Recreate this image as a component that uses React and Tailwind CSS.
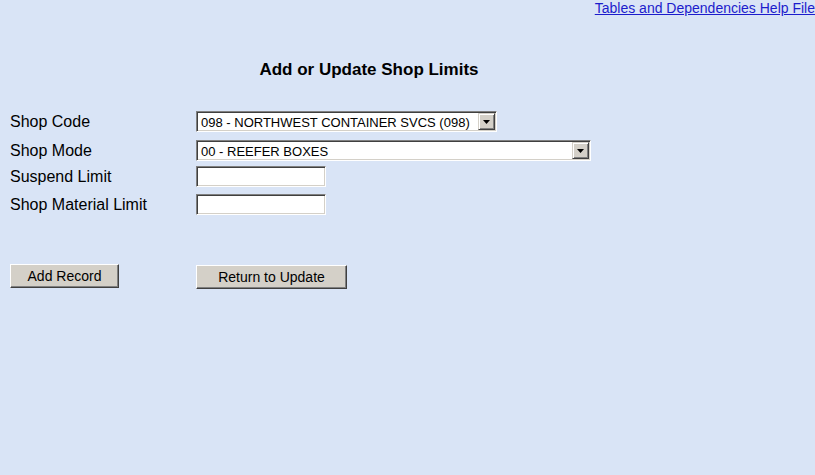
export default function App() {
  return (
    <div className="min-h-[475px] w-[815px] bg-[#d9e4f6] font-['Liberation_Sans',Arial,sans-serif] text-black">
      <div className="text-right text-[14px] leading-[16px]">
        <a href="#" className="text-[#1c1ccc] underline">Tables and Dependencies Help File</a>
      </div>

      <h1 className="mt-[44px] w-[738px] text-center text-[17px] font-bold leading-[19px]">Add or Update Shop Limits</h1>

      <div className="mt-[32px] pl-[10px]">
        <FormRow label="Shop Code" height="h-[29px]">
          <Select width="w-[301px]" value="098 - NORTHWEST CONTAINER SVCS (098)" />
        </FormRow>
        <FormRow label="Shop Mode" height="h-[26px]">
          <Select width="w-[395px]" value="00 - REEFER BOXES" />
        </FormRow>
        <FormRow label="Suspend Limit" height="h-[28px]">
          <TextBox />
        </FormRow>
        <FormRow label="Shop Material Limit" height="h-[21px]">
          <TextBox />
        </FormRow>
      </div>

      <div className="mt-[49px] flex items-start pl-[10px]">
        <div className="w-[186px]">
          <Button width="w-[109px]">Add Record</Button>
        </div>
        <div className="pt-[1px]">
          <Button width="w-[151px]">Return to Update</Button>
        </div>
      </div>
    </div>
  );
}

function FormRow({ label, height, children }) {
  return (
    <div className={`flex items-start ${height}`}>
      <div className="flex h-[21px] w-[186px] items-center text-[16px]">{label}</div>
      <div>{children}</div>
    </div>
  );
}

function Select({ width, value }) {
  return (
    <div className={`${width} flex h-[21px] items-center border border-b-white border-l-[#808080] border-r-white border-t-[#808080] bg-white shadow-[inset_1px_1px_0_#404040,inset_-1px_-1px_0_#d4d0c8]`}>
      <span className="flex-1 truncate pl-[4px] pt-[1px] text-[13px] leading-[15px]">{value}</span>
      <div className="mr-[1px] flex h-[17px] w-[17px] items-center justify-center border border-b-[#404040] border-l-[#d4d0c8] border-r-[#404040] border-t-[#d4d0c8] bg-[#d4d0c8] shadow-[inset_1px_1px_0_white,inset_-1px_-1px_0_#808080]">
        <svg width="7" height="4" viewBox="0 0 7 4">
          <path d="M0 0h7L3.5 4z" fill="black" />
        </svg>
      </div>
    </div>
  );
}

function TextBox() {
  return (
    <div className="h-[21px] w-[130px] border border-b-white border-l-[#808080] border-r-white border-t-[#808080] bg-white shadow-[inset_1px_1px_0_#404040,inset_-1px_-1px_0_#d4d0c8]" />
  );
}

function Button({ width, children }) {
  return (
    <button className={`${width} h-[24px] border border-b-[#404040] border-l-white border-r-[#404040] border-t-white bg-[#d4d0c8] text-[14px] leading-[16px] shadow-[inset_-1px_-1px_0_#808080]`}>
      {children}
    </button>
  );
}
